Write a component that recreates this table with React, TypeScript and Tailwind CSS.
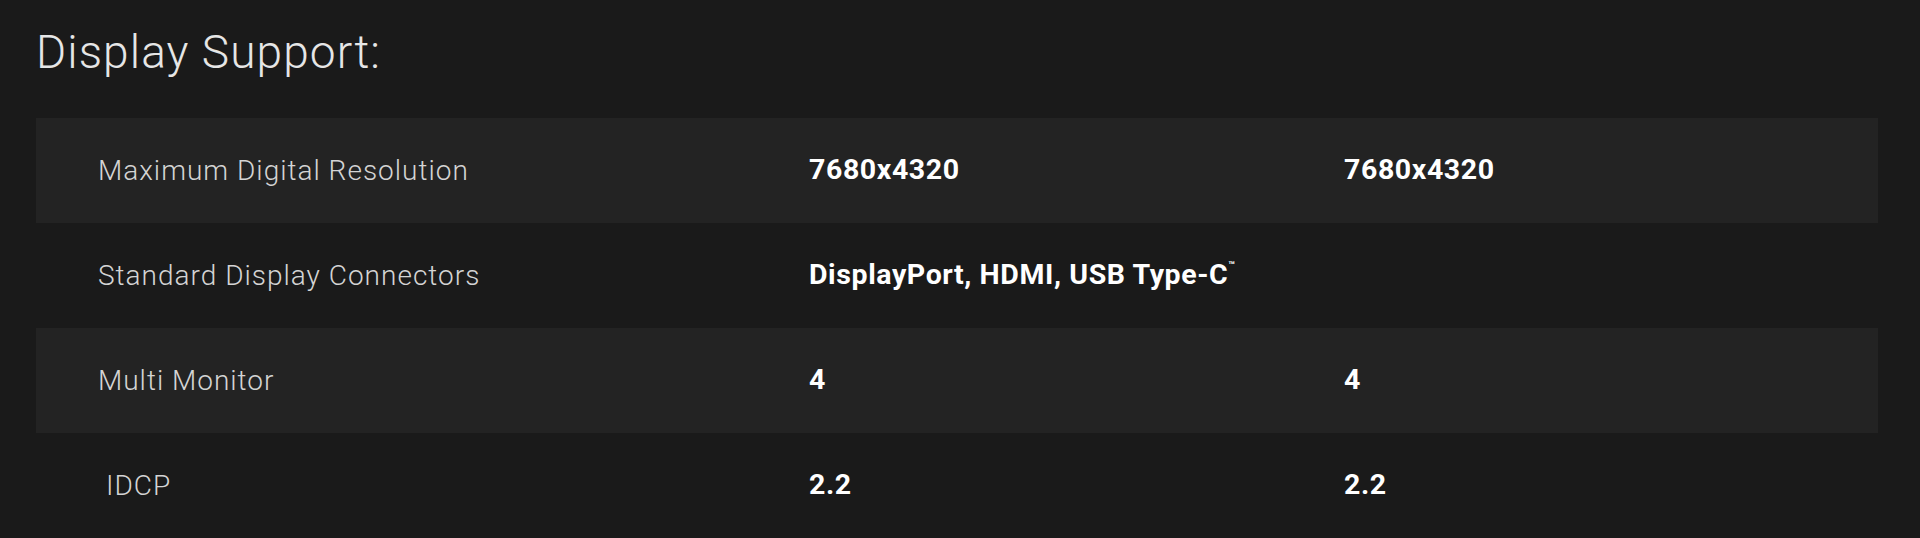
const rows = [
  { label: "Maximum Digital Resolution", values: ["7680x4320", "7680x4320"] },
  { label: "Standard Display Connectors", values: ["DisplayPort, HDMI, USB Type-C", ""], tm: true },
  { label: "Multi Monitor", values: ["4", "4"] },
  { label: "IDCP", values: ["2.2", "2.2"], indent: true },
];

const App = () => {
  return (
    <div
      className="min-h-[538px] w-full bg-[#1a1a1a] pl-[36px] pr-[42px] pt-[29px] overflow-hidden"
      style={{ fontFamily: "Roboto, 'Liberation Sans', sans-serif" }}
    >
      <h2 className="text-[46px] leading-none font-light text-[#e6e6e6] tracking-[1.1px] mb-[43px]">
        Display Support:
      </h2>

      <div className="flex flex-col">
        {rows.map((row, i) => (
          <div
            key={row.label}
            className={`grid grid-cols-[711px_535px_1fr] items-center h-[105px] pl-[62px] ${
              i % 2 === 0 ? "bg-[#232323]" : "bg-transparent"
            }`}
          >
            <div
              className={`text-[28px] font-light text-[#d4d4d4] tracking-[1px] ${
                row.indent ? "pl-[8px]" : ""
              }`}
            >
              {row.label}
            </div>
            <div className="text-[28.5px] font-bold text-white tracking-[0.6px] whitespace-nowrap">
              {row.values[0]}
              {row.tm && (
                <span className="text-[11px] font-bold align-top relative top-[4px]">™</span>
              )}
            </div>
            <div className="text-[28.5px] font-bold text-white tracking-[0.6px]">
              {row.values[1]}
            </div>
          </div>
        ))}
      </div>
    </div>
  );
};

export default App;
